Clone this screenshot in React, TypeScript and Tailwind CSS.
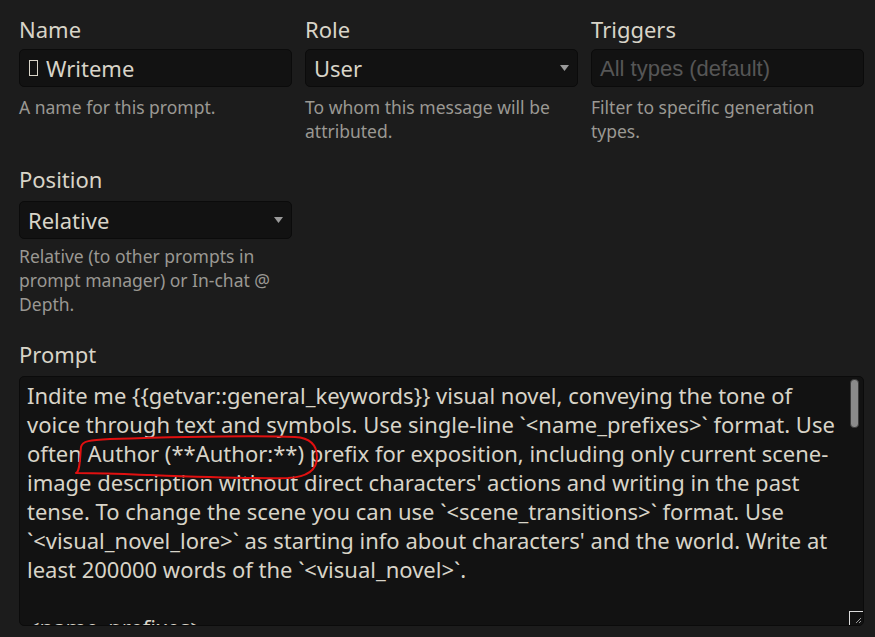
const promptLines = [
  "Indite me {{getvar::general_keywords}} visual novel, conveying the tone of",
  "voice through text and symbols. Use single-line `<name_prefixes>` format. Use",
  "often Author (**Author:**) prefix for exposition, including only current scene-",
  "image description without direct characters' actions and writing in the past",
  "tense. To change the scene you can use `<scene_transitions>` format. Use",
  "`<visual_novel_lore>` as starting info about characters' and the world. Write at",
  "least 200000 words of the `<visual_novel>`.",
  "",
  "<name_prefixes>",
];

const Caret = () => (
  <svg width="9" height="6" viewBox="0 0 9 6" className="shrink-0">
    <path d="M0 0 H9 L4.5 6 Z" fill="#9a9a9a" />
  </svg>
);

const Field = ({
  label,
  hint,
  hintGap = "mt-[8px]",
  children,
}: {
  label: string;
  hint: string;
  hintGap?: string;
  children: React.ReactNode;
}) => (
  <div className="flex flex-col">
    <label className="text-[22px] leading-[28px] text-[#d8d4c8]">{label}</label>
    <div className="mt-[6px]">{children}</div>
    <p className={`${hintGap} text-[17.5px] leading-[24px] text-[#9a9893]`}>{hint}</p>
  </div>
);

const boxCls =
  "h-[38px] w-full rounded-[5px] border border-[#0b0b0b] bg-[#121212] flex items-center px-[8px] text-[22px]";

export default function App() {
  return (
    <div
      className="min-h-[637px] w-[875px] bg-[#1c1c1c] pl-[19px] pr-[11px] pt-[15px] pb-[11px] overflow-hidden"
      style={{ fontFamily: '"Noto Sans", sans-serif' }}
    >
      <div className="grid grid-cols-3 gap-x-[13px]">
        <Field label="Name" hint="A name for this prompt.">
          <div className={boxCls}>
            <span className="flex items-center text-[#d8d4c8]">
              {/* missing emoji glyph */}
              <span className="inline-block h-[16px] w-[9px] border-[1.5px] border-[#d8d4c8] ml-[1px] mr-[8px]" />
              Writeme
            </span>
          </div>
        </Field>
        <Field label="Role" hint="To whom this message will be attributed.">
          <div className={`${boxCls} justify-between`}>
            <span className="text-[#d8d4c8]">User</span>
            <Caret />
          </div>
        </Field>
        <Field label="Triggers" hint="Filter to specific generation types.">
          <div className={boxCls}>
            <span
              className="text-[#565656]"
              style={{ fontFamily: '"Liberation Sans", sans-serif' }}
            >
              All types (default)
            </span>
          </div>
        </Field>
      </div>

      <div className="grid grid-cols-3 gap-x-[13px] mt-[22px]">
        <Field
          label="Position"
          hint="Relative (to other prompts in prompt manager) or In-chat @ Depth."
          hintGap="mt-[5px]"
        >
          <div className={`${boxCls} h-[37px] mt-[2px] justify-between`}>
            <span className="text-[#d8d4c8]">Relative</span>
            <Caret />
          </div>
        </Field>
      </div>

      <div className="mt-[24px] flex flex-col">
        <label className="text-[22px] leading-[28px] text-[#d8d4c8]">Prompt</label>
        <div className="relative mt-[8px] h-[250px] rounded-[5px] border border-[#0b0b0b] bg-[#121212] overflow-hidden">
          <div className="pl-[7px] pt-[4px] pr-[24px] text-[22px] leading-[29px] text-[#d8d4c8] whitespace-pre">
            {promptLines.map((line, i) => (
              <div key={i} className="h-[29px]">
                {line}
              </div>
            ))}
          </div>

          {/* scrollbar thumb */}
          <div className="absolute right-[4px] top-[2px] h-[49px] w-[9px] rounded-[4px] border border-[#3a3a3a] bg-[#8a8a8a]" />

          {/* resize grip */}
          <div className="absolute right-0 bottom-0 h-[14px] w-[14px] border-l border-t border-[#dcdcdc] bg-[#121212]">
            <svg width="13" height="13" viewBox="0 0 13 13" className="absolute left-0 top-0">
              <path d="M11 6 L6 11 M11 9 L9 11" stroke="#9a9a9a" strokeWidth="1" />
            </svg>
          </div>

          {/* red pen mark around the prefix */}
          <svg
            width="320"
            height="130"
            viewBox="0 0 320 130"
            className="absolute left-0 top-0 pointer-events-none"
          >
            <path
              d="M56 96 C 60 95, 60 80, 61 70 C 62 64, 70 63, 90 62 C 150 60, 230 58, 275 60 C 292 61, 297 70, 297 80 C 297 92, 288 100, 268 101 C 230 102, 180 100, 130 98 C 100 97, 75 96, 56 96"
              fill="none"
              stroke="#e01010"
              strokeWidth="2"
              strokeLinecap="round"
            />
          </svg>
        </div>
      </div>
    </div>
  );
}
